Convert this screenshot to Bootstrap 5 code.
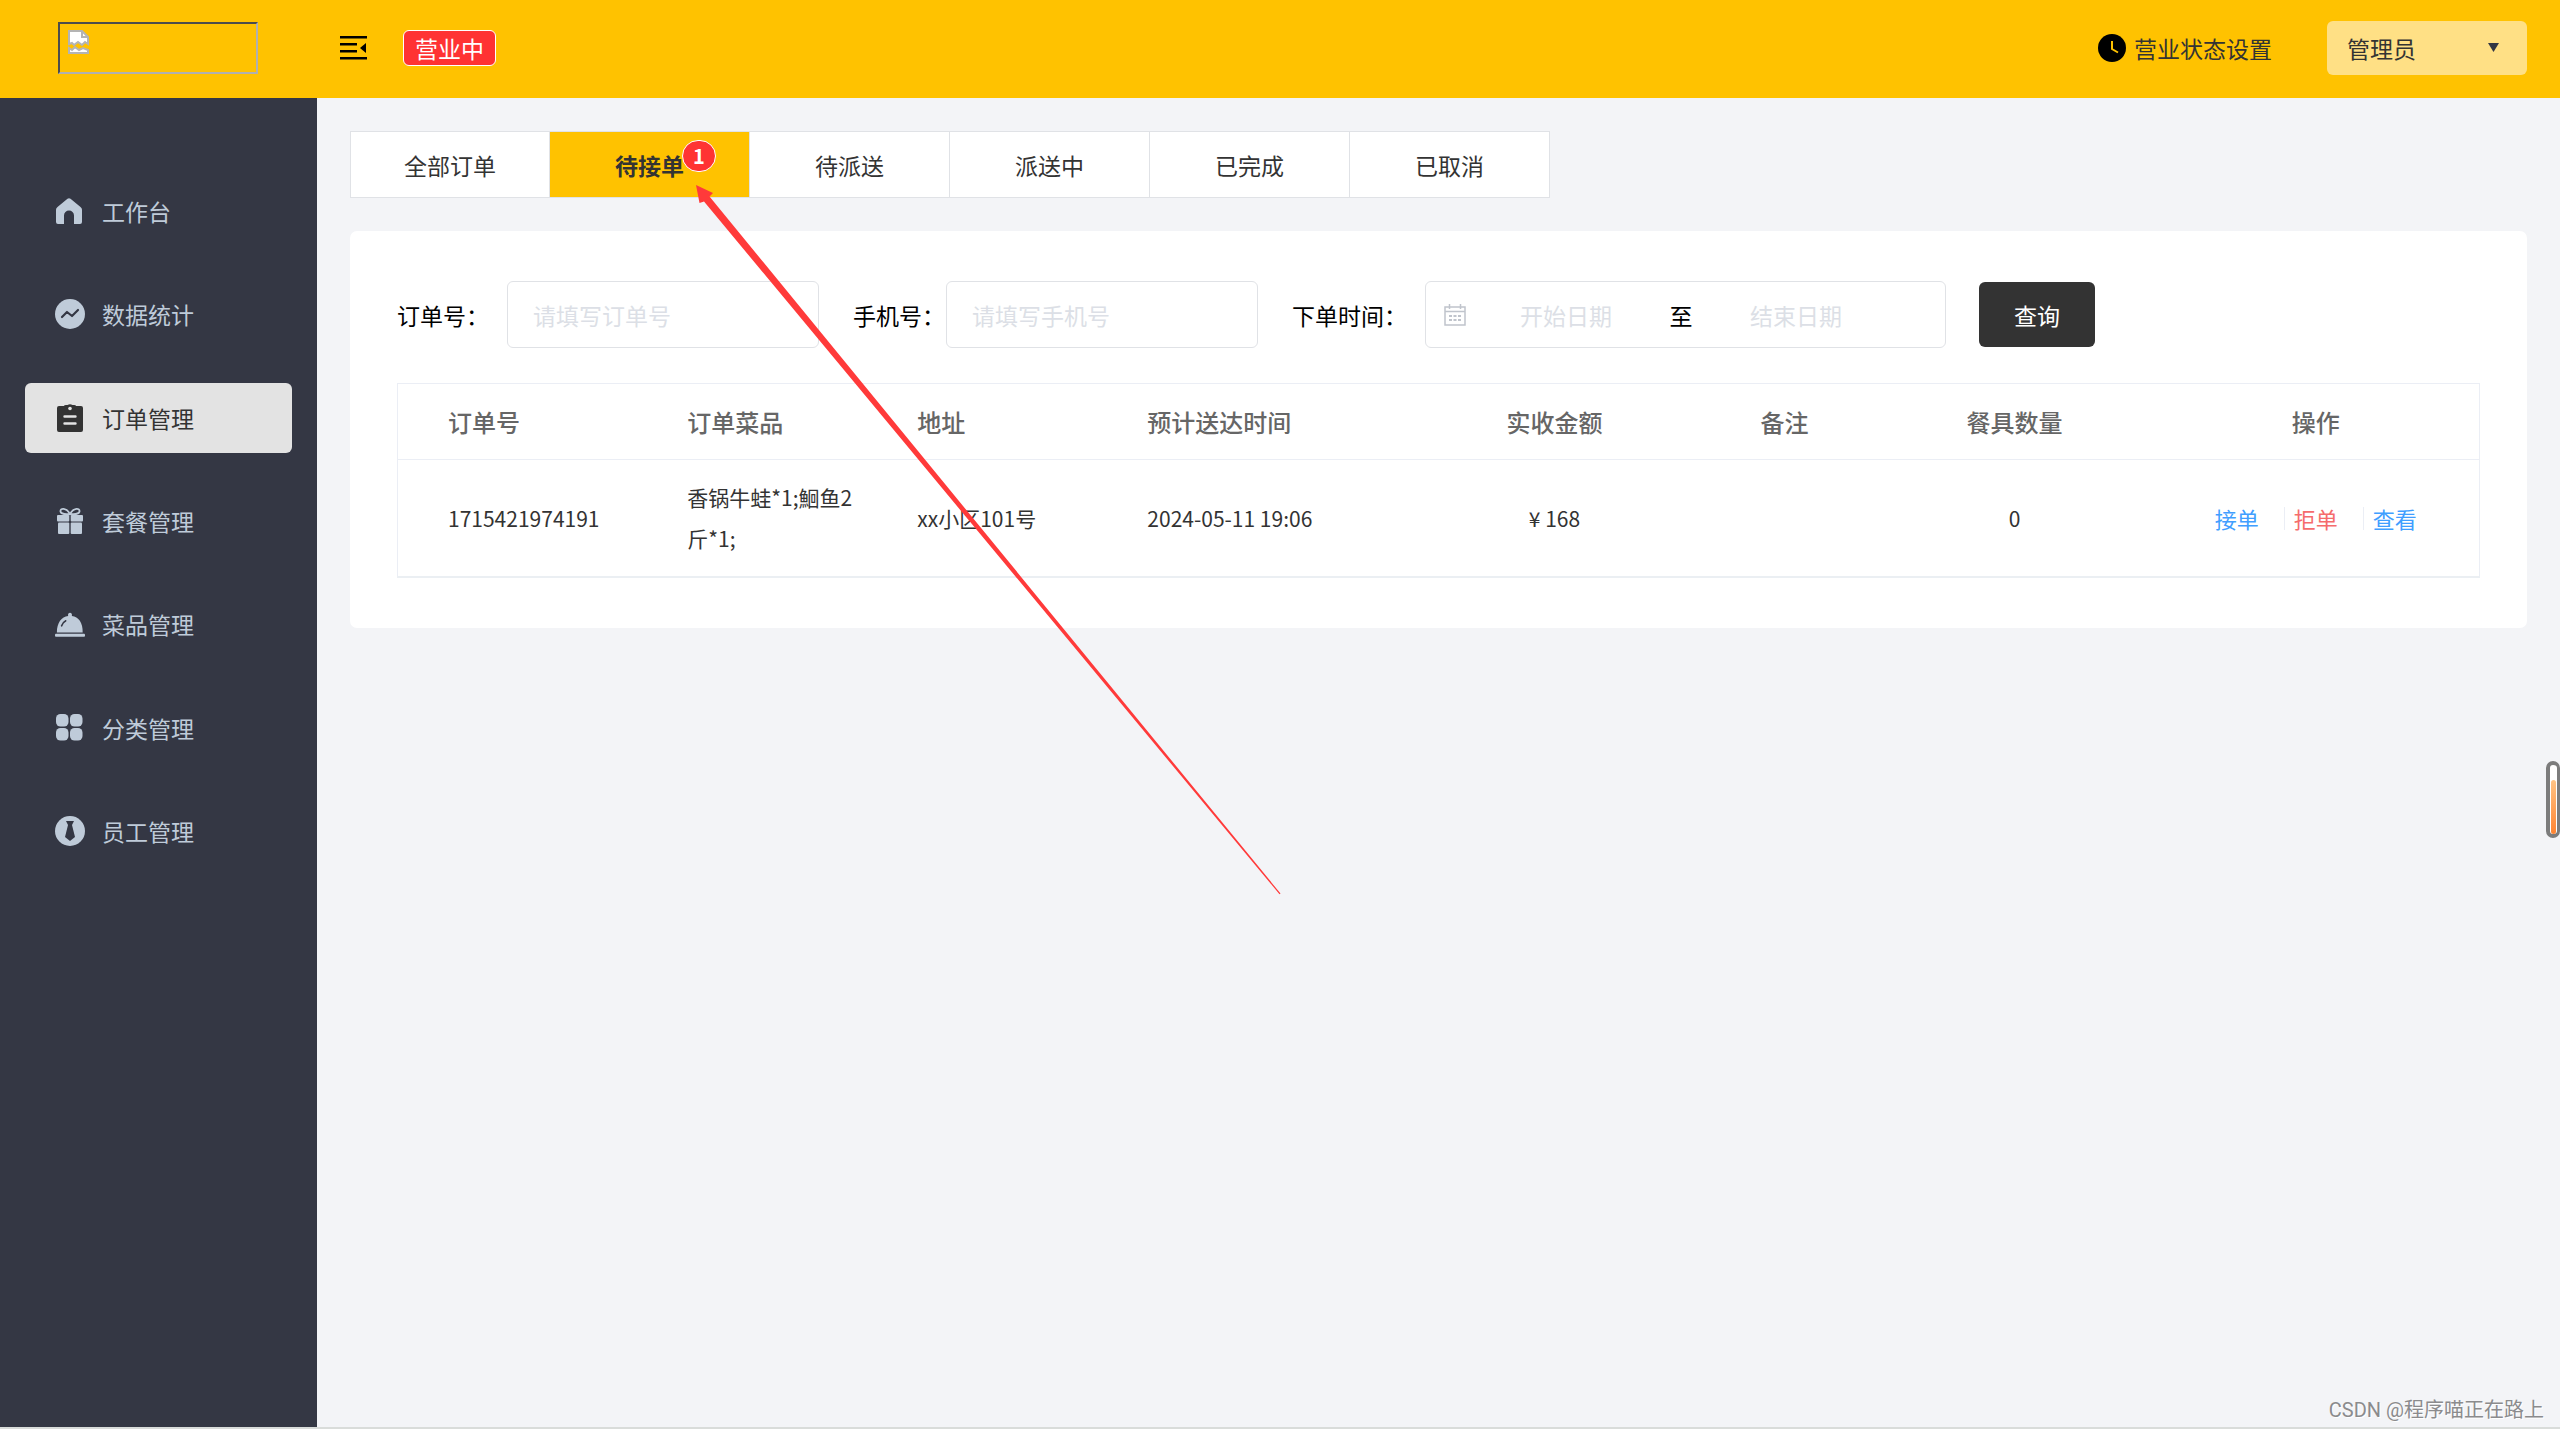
<!DOCTYPE html>
<html lang="zh-CN">
<head>
<meta charset="utf-8">
<meta name="viewport" content="width=device-width, initial-scale=1">
<title>订单管理</title>
<link href="https://cdn.jsdelivr.net/npm/bootstrap@5.3.0/dist/css/bootstrap.min.css" rel="stylesheet">
<style>
:root { --brand: #ffc200; --ink: #333333; --line: #e0e2e6; --gap: 33px; }
body { font-family: "Noto Sans CJK SC", "Noto Sans", sans-serif; font-size: 23px; line-height: 34px; color: var(--ink); background: #f3f4f7; }
svg { flex: none; display: block; }
input::placeholder { color: #dcdfe6 !important; opacity: 1 !important; }

.topbar { height: 98px; background: var(--brand); padding: 0 var(--gap) 2px 0; }
.brand-cell { width: 317px; padding-left: 58px; }
.logo-frame { width: 200px; height: 52px; border: 2px solid; border-color: #4c4c4c #b0b0b0 #b0b0b0 #4c4c4c; padding: 6px 8px; }
.fold-btn { padding: 0 36px 0 23px; }
.state-tag { background: #ff3333; border: 1px solid #fff; border-radius: 6px; padding: 0 11px; }
.state-link { color: var(--ink); gap: 8px; margin-right: 55px; }
.admin-select { appearance: none; width: 200px; height: 54px; border: 0; border-radius: 6px; background: #ffe085; color: var(--ink); padding: 0 20px; }
.admin-box svg { right: 28px; top: 22px; pointer-events: none; }

.sidebar { width: 317px; background: #343744; padding: 78px 25px; }
.side-menu { min-height: 690px; }
.side-menu .nav-link { height: 70px; border-radius: 6px; padding: 0 30px; color: #bfcbd9; gap: 17px; }
.side-menu .nav-link.active { background: #e3e3e3; color: var(--ink); }

.content-area { padding: var(--gap); }
.order-tabs { border: 1px solid var(--line); background: #fff; }
.order-tabs button { width: 200px; height: 65px; border: 0; border-right: 1px solid var(--line); background: #fff; color: var(--ink); }
.order-tabs button:first-child { width: 199px; }
.order-tabs button:last-child { width: 199px; border-right: 0; }
.order-tabs button.active { background: var(--brand); font-weight: 700; }
.count-dot { left: 132px; top: 8px; width: 34px; height: 32px; border: 1px solid #fff; border-radius: 16px; background: #ff3333; color: #fff; font-size: 20px; line-height: 30px; }

.panel { background: #fff; border-radius: 7px; margin-top: var(--gap); padding: 50px 47px; }
.filters { margin-bottom: 35px; color: #000; }
.filters label { padding-right: 18px; }
.filters label.tight { padding-right: 1px; }
.filter-box { height: 67px; border: 1px solid var(--line); border-radius: 6px; background: #fff; }
.filter-text { width: 312px; padding: 0 25px; margin-right: 34px; }
.date-range { width: 521px; padding-left: 18px; margin-right: var(--gap); }
.date-range input { width: 200px; border: 0; outline: 0; padding: 0; text-align: center; background: none; }
.date-range span { width: 30px; text-align: center; }
.query-btn { width: 116px; height: 65px; border: 0; border-radius: 6px; background: var(--ink); color: #fff; }

.order-table { table-layout: fixed; border: 1px solid #ebeef5; border-bottom: 2px solid #ebeff3; margin: 0; font-size: 21px; color: var(--ink); }
.order-table th, .order-table td { padding: 17px; vertical-align: middle; border-bottom: 0; background: none; color: inherit; line-height: 41px; }
.order-table th { font-size: 24px; font-weight: 500; color: #666; border-bottom: 1px solid #ebeef5; }
.order-table .dish-cell { padding-right: 34px; }
.order-table tr > :first-child { padding-left: 50px; }
.order-table tr > :last-child { padding-left: 40px; }
.row-actions { font-size: 22px; line-height: 23px; }
.row-actions a { color: #409eff; padding-right: 25px; border-right: 1px solid #ebeef5; margin-right: 9px; }
.row-actions a.danger-link { color: #f56c6c; }
.row-actions a:last-child { padding-right: 0; border: 0; margin: 0; }

.pointer-arrow { left: 690px; top: 180px; pointer-events: none; }
.scroll-gauge { right: 0; top: 761px; width: 14px; height: 77px; border: 4px solid #7c7c7c; border-right-width: 3px; border-radius: 7px; background: #fff; padding: 15px 1px 0; }
.scroll-gauge div { border-radius: 3px; background: linear-gradient(#ffc384, #ff8432); }
.page-mark { right: 16px; bottom: 4px; font-family: Roboto, "Noto Sans CJK SC", sans-serif; font-size: 20px; line-height: 30px; color: #8b8b8d; text-shadow: 1px 1px 0 #fff; }
.foot-line { height: 2px; background: #d9dcda; }
</style>
<script src="https://cdn.jsdelivr.net/npm/bootstrap@5.3.0/dist/js/bootstrap.bundle.min.js"></script>
</head>
<body>
<div class="position-relative min-vh-100 d-flex flex-column">
  <header class="topbar d-flex align-items-center">
    <div class="brand-cell">
      <div class="logo-frame">
        <svg width="22" height="24" viewBox="0 0 22 24"><path d="M1 1h13l6 6v7l-3-2-3 3-4-3-4 3-2-2-3 1z" fill="#fff" stroke="#b4b4b4" stroke-width="2"/><path d="M14 1v6h6" fill="none" stroke="#b4b4b4" stroke-width="2"/><path d="M1 18l3 2 3-3 4 3 4-2 5 2v3H1z" fill="#fff" stroke="#b4b4b4" stroke-width="2"/></svg>
      </div>
    </div>
    <button type="button" class="btn fold-btn border-0" aria-label="折叠菜单">
      <svg width="27" height="24" viewBox="0 0 27 24"><path d="M0 1.300h27M0 8.300h17M0 15.300h17M0 22.300h27" stroke="#000" stroke-width="2.500"/><path d="M26 7v10l-6-5z"/></svg>
    </button>
    <span class="state-tag text-white">营业中</span>
    <a href="#" class="state-link d-flex align-items-center text-decoration-none ms-auto">
      <svg width="28" height="28" viewBox="0 0 28 28"><circle cx="14" cy="14" r="14"/><path d="M14 7v8l6 3.500" fill="none" stroke="#ffc200" stroke-width="2"/></svg>
      营业状态设置
    </a>
    <div class="admin-box position-relative">
      <select class="admin-select" aria-label="账号"><option>管理员</option></select>
      <svg class="position-absolute" width="11" height="9" viewBox="0 0 11 9"><path d="M0 0h11L5.500 9z" fill="#333744"/></svg>
    </div>
  </header>

  <div class="d-flex flex-grow-1">
    <aside class="sidebar flex-shrink-0">
      <nav class="side-menu nav flex-column flex-nowrap justify-content-between">
        <a href="#" class="nav-link d-flex align-items-center"><svg width="30" height="30" viewBox="0 0 30 30" fill="currentColor"><path d="M12.500 2.800q1.500-1.300 3 0l10 8.200q1.500 1.200 1.500 2.800V26q0 2-2 2h-6v-8.500a5 5 0 0 0-10 0V28H3q-2 0-2-2V13.800q0-1.600 1.500-2.800z"/></svg>工作台</a>
        <a href="#" class="nav-link d-flex align-items-center"><svg width="30" height="30" viewBox="0 0 30 30"><circle cx="15" cy="15" r="15" fill="currentColor"/><path d="M7 18l5-5 5 4 6-6" fill="none" stroke="#343744" stroke-width="2.200" stroke-linecap="round" stroke-linejoin="round"/></svg>数据统计</a>
        <a href="#" class="nav-link active d-flex align-items-center" aria-current="page"><svg width="30" height="30" viewBox="0 0 30 30"><path d="M4 3h5q0-1 2-1h1.500q2.500-1.500 5 0H19q2 0 2 1h5q2 0 2 2v22q0 2-2 2H4q-2 0-2-2V5q0-2 2-2z" fill="currentColor"/><circle cx="15" cy="5.500" r="1.800" fill="#e3e3e3"/><path d="M9.500 13.500h11M9.500 20.500h11" stroke="#e3e3e3" stroke-width="2.400" stroke-linecap="round"/></svg>订单管理</a>
        <a href="#" class="nav-link d-flex align-items-center"><svg width="30" height="30" viewBox="0 0 30 30" fill="currentColor"><path d="M15 8C11 1 5 2 5.500 5.500S12 8 15 8c3 0 9 1 9.500-2.500S19 1 15 8z" fill="none" stroke="currentColor" stroke-width="1.800"/><rect x="2" y="9" width="12.300" height="6.500" rx="1"/><rect x="15.700" y="9" width="12.300" height="6.500" rx="1"/><rect x="3" y="16.500" width="11.300" height="11.500" rx="1"/><rect x="15.700" y="16.500" width="11.300" height="11.500" rx="1"/></svg>套餐管理</a>
        <a href="#" class="nav-link d-flex align-items-center"><svg width="30" height="30" viewBox="0 0 32 30" fill="currentColor"><path d="M2 24C2 14 7 7 14 6.500 13 2 19 2 18 6.500 25 7 30 14 29.500 24z"/><path d="M7 17q1.500-4 4.500-5.500" fill="none" stroke="#343744" stroke-width="1.600" stroke-linecap="round"/><rect y="25.500" width="32" height="3" rx="1"/></svg>菜品管理</a>
        <a href="#" class="nav-link d-flex align-items-center"><svg width="30" height="30" viewBox="0 0 30 30" fill="currentColor"><rect x="1" y="1" width="12.500" height="12.500" rx="4.500"/><rect x="15" y="1" width="12.500" height="12.500" rx="4.500"/><rect x="1" y="15" width="12.500" height="12.500" rx="4.500"/><rect x="15" y="15" width="12.500" height="12.500" rx="4.500"/></svg>分类管理</a>
        <a href="#" class="nav-link d-flex align-items-center"><svg width="30" height="30" viewBox="0 0 30 30"><circle cx="15" cy="15" r="15" fill="currentColor"/><path d="M11 5h8l-2 4 3 12-5 4-5-4 3-12z" fill="#343744"/></svg>员工管理</a>
      </nav>
    </aside>

    <main class="content-area flex-grow-1">
      <div class="order-tabs d-inline-flex align-top">
        <button type="button">全部订单</button>
        <button type="button" class="active position-relative">待接单<span class="count-dot position-absolute">1</span></button>
        <button type="button">待派送</button>
        <button type="button">派送中</button>
        <button type="button">已完成</button>
        <button type="button">已取消</button>
      </div>

      <section class="panel">
        <form class="filters d-flex align-items-center">
          <label for="orderNo">订单号：</label>
          <input id="orderNo" type="text" class="filter-box filter-text" placeholder="请填写订单号">
          <label for="phoneNo" class="tight">手机号：</label>
          <input id="phoneNo" type="text" class="filter-box filter-text" placeholder="请填写手机号">
          <label for="dateFrom">下单时间：</label>
          <div class="filter-box date-range d-flex align-items-center">
            <svg width="22" height="22" viewBox="0 0 22 22" fill="none" stroke="#c0c4cc" stroke-width="1.500"><path d="M1 3h20v18H1zM1 7.500h20M5.500 0v5M16.500 0v5"/><path d="M5 12h12M5 16h12" stroke-width="2" stroke-dasharray="3 1.500"/></svg>
            <input id="dateFrom" type="text" placeholder="开始日期">
            <span>至</span>
            <input type="text" placeholder="结束日期" aria-label="结束日期">
          </div>
          <button type="button" class="query-btn">查询</button>
        </form>

        <table class="table order-table">
          <colgroup>
            <col style="width:13.1%"><col style="width:11.05%"><col style="width:11.05%"><col style="width:14.85%"><col style="width:11.05%"><col style="width:11.05%"><col style="width:11.05%"><col>
          </colgroup>
          <thead>
            <tr><th>订单号</th><th>订单菜品</th><th>地址</th><th>预计送达时间</th><th class="text-center">实收金额</th><th class="text-center">备注</th><th class="text-center">餐具数量</th><th class="text-center">操作</th></tr>
          </thead>
          <tbody>
            <tr>
              <td>1715421974191</td>
              <td class="dish-cell">香锅牛蛙*1;鮰鱼2斤*1;</td>
              <td>xx小区101号</td>
              <td>2024-05-11 19:06</td>
              <td class="text-center">¥ 168</td>
              <td></td>
              <td class="text-center">0</td>
              <td><div class="row-actions d-flex justify-content-center"><a href="#" class="text-decoration-none">接单</a><a href="#" class="danger-link text-decoration-none">拒单</a><a href="#" class="text-decoration-none">查看</a></div></td>
            </tr>
          </tbody>
        </table>
      </section>
    </main>
  </div>
  <div class="foot-line"></div>

  <svg class="pointer-arrow position-absolute" width="600" height="720" viewBox="690 180 600 720"><path d="M696 185l17 8-3.500 3.500L1280.500 893.500 1279.500 894.300 704 201.500 699.500 203z" fill="#ff3a3a"/></svg>
  <div class="scroll-gauge position-absolute"><div class="h-100"></div></div>
  <div class="page-mark position-absolute">CSDN @程序喵正在路上</div>
</div>
</body>
</html>
